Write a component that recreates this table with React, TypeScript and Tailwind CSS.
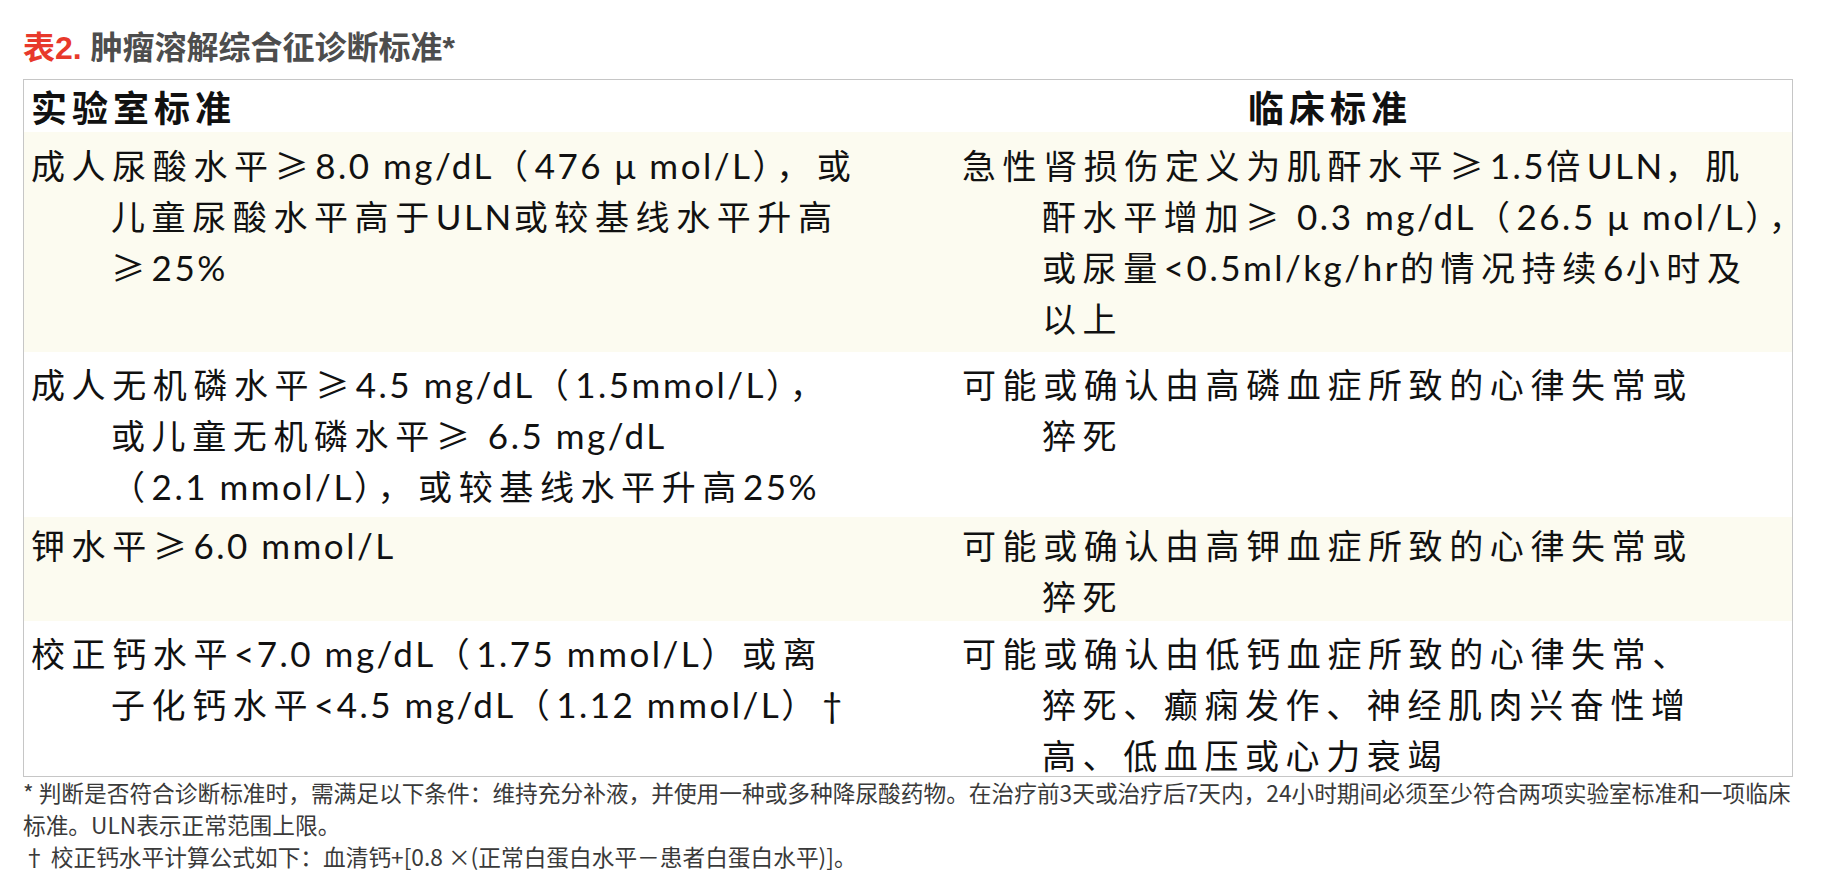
import type { ReactNode } from 'react';

// CJK runs and Latin runs are set in different fonts and sizes, as in the printed table
const CJK_RUN = /([\u2E80-\u9FFF\u3000-\u303F\uFF00-\uFFEF≥]+)/;

function Rich({ text }: { text: string }) {
  const parts = text.split(CJK_RUN);
  return (
    <>
      {parts.map((part, i) =>
        part === '' ? null : i % 2 === 1 ? (
          <span key={i} className="font-['Noto_Sans_CJK_SC',sans-serif] text-[34px] leading-none tracking-[6.6px]">
            {part}
          </span>
        ) : (
          <span key={i} className="font-['Lato','Noto_Sans_CJK_SC',sans-serif] text-[35px] leading-none tracking-[2.5px]">
            {part}
          </span>
        ),
      )}
    </>
  );
}

function Lines({ lines }: { lines: string[] }) {
  return (
    <>
      {lines.map((line, i) => (
        <div
          key={line}
          className={
            i === 0
              ? 'h-[51px] whitespace-nowrap font-["Noto_Sans_CJK_SC",sans-serif] text-[34px] leading-[51px] text-[#111]'
              : 'h-[51px] whitespace-nowrap pl-[80px] font-["Noto_Sans_CJK_SC",sans-serif] text-[34px] leading-[51px] text-[#111]'
          }
        >
          <Rich text={line} />
        </div>
      ))}
    </>
  );
}

interface Criterion {
  lab: string[];
  clinical: string[];
  height: string;
  pad: string;
  tinted: boolean;
}

const rows: Criterion[] = [
  {
    lab: ['成人尿酸水平≥8.0 mg/dL（476 μ mol/L），或', '儿童尿酸水平高于ULN或较基线水平升高', '≥25%'],
    clinical: [
      '急性肾损伤定义为肌酐水平≥1.5倍ULN，肌',
      '酐水平增加≥ 0.3 mg/dL（26.5 μ mol/L），',
      '或尿量<0.5ml/kg/hr的情况持续6小时及',
      '以上',
    ],
    height: 'h-[220px]',
    pad: 'pt-[7px]',
    tinted: true,
  },
  {
    lab: ['成人无机磷水平≥4.5 mg/dL（1.5mmol/L），', '或儿童无机磷水平≥ 6.5 mg/dL', '（2.1 mmol/L），或较基线水平升高25%'],
    clinical: ['可能或确认由高磷血症所致的心律失常或', '猝死'],
    height: 'h-[165px]',
    pad: 'pt-[6px]',
    tinted: false,
  },
  {
    lab: ['钾水平≥6.0 mmol/L'],
    clinical: ['可能或确认由高钾血症所致的心律失常或', '猝死'],
    height: 'h-[104px]',
    pad: 'pt-[2px]',
    tinted: true,
  },
  {
    lab: ['校正钙水平<7.0 mg/dL（1.75 mmol/L）或离', '子化钙水平<4.5 mg/dL（1.12 mmol/L）†'],
    clinical: ['可能或确认由低钙血症所致的心律失常、', '猝死、癫痫发作、神经肌肉兴奋性增', '高、低血压或心力衰竭'],
    height: 'h-[155px]',
    pad: 'pt-[6px]',
    tinted: false,
  },
];

function Footnote({ children }: { children: ReactNode }) {
  return (
    <div className="h-[32px] whitespace-nowrap font-['Noto_Sans_CJK_SC',sans-serif] text-[22.7px] leading-[32px] text-[#3a3a3a]">
      {children}
    </div>
  );
}

export default function App() {
  return (
    <div className="h-[888px] w-[1830px] overflow-hidden bg-white pl-[23px]">
      <h2 className="mb-[11px] pt-[28px] font-['Liberation_Sans','Noto_Sans_CJK_SC',sans-serif] text-[32px] font-bold leading-[40px] text-[#4d4d4d]">
        <span className="text-[#e8392b]">表2.</span> 肿瘤溶解综合征诊断标准*
      </h2>

      <div className="w-[1770px] border border-[#c6c6c6]">
        <div className="flex h-[52px] items-center font-['Noto_Sans_CJK_SC',sans-serif] text-[36px] font-bold tracking-[5px] text-[#111]">
          <div className="w-[844px] shrink-0 pl-[7px]">实验室标准</div>
          <div className="min-w-0 flex-1 text-center">临床标准</div>
        </div>

        {rows.map((row) => (
          <div key={row.lab[0]} className={`flex ${row.height} ${row.tinted ? 'bg-[#fcfbf0]' : 'bg-white'}`}>
            <div className={`w-[844px] shrink-0 pl-[7px] ${row.pad}`}>
              <Lines lines={row.lab} />
            </div>
            <div className={`min-w-0 flex-1 pl-[94px] ${row.pad}`}>
              <Lines lines={row.clinical} />
            </div>
          </div>
        ))}
      </div>

      <Footnote>
        * 判断是否符合诊断标准时，需满足以下条件：维持充分补液，并使用一种或多种降尿酸药物。在治疗前3天或治疗后7天内，24小时期间必须至少符合两项实验室标准和一项临床
      </Footnote>
      <Footnote>标准。ULN表示正常范围上限。</Footnote>
      <Footnote>† 校正钙水平计算公式如下：血清钙+[0.8 ×(正常白蛋白水平－患者白蛋白水平)]。</Footnote>
    </div>
  );
}
